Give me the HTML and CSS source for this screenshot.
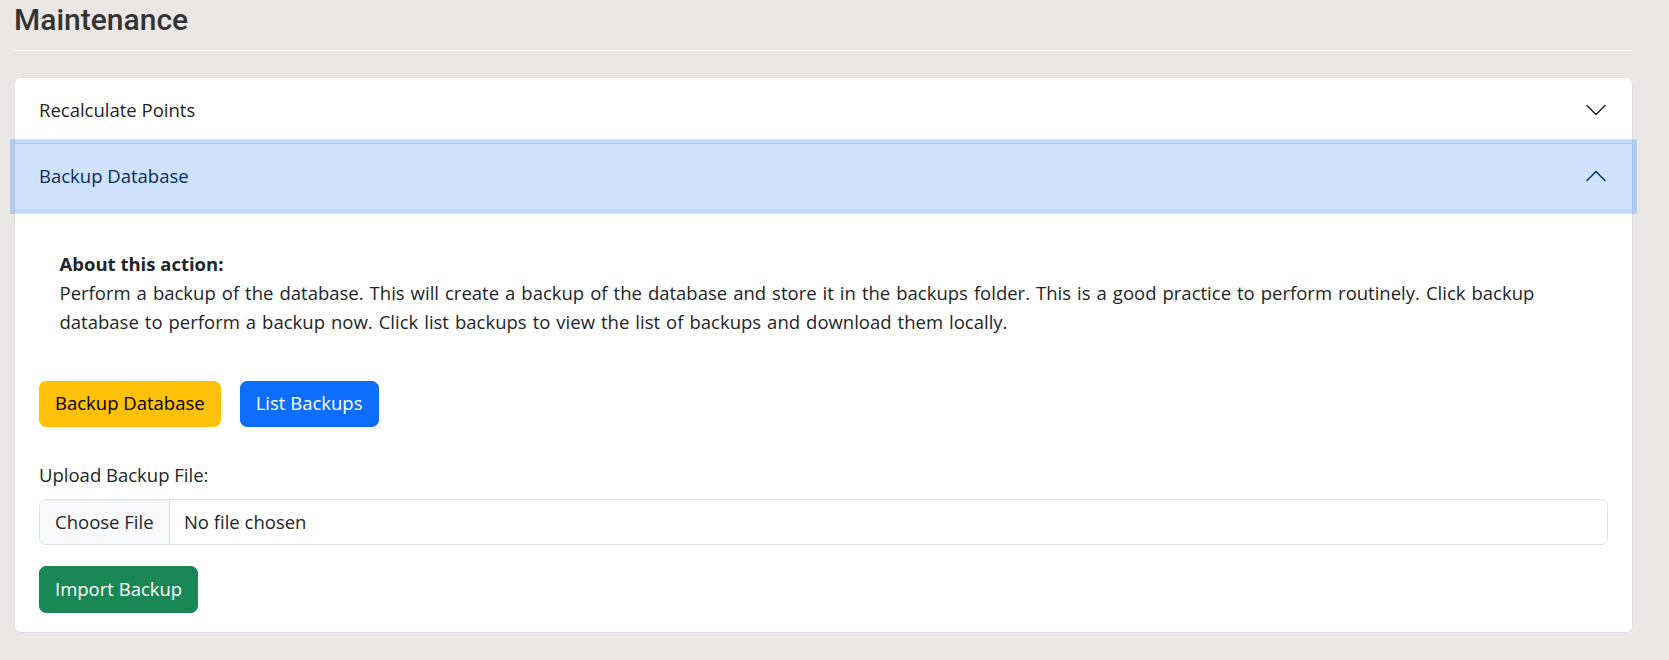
FILE: index.html
```html
<!DOCTYPE html>
<html lang="en">
<head>
<meta charset="utf-8">
<title>Maintenance</title>
<link rel="stylesheet" href="styles.css">
</head>
<body>
<div class="page">
  <h1 class="title">Maintenance</h1>
  <hr class="rule">
  <div class="accordion">
    <div class="acc-item">
      <h2 class="acc-header">
        <button class="acc-btn" type="button">
          <span>Recalculate Points</span>
          <svg class="chev" viewBox="0 0 16 16" fill="none" stroke="#212529" stroke-linecap="round" stroke-linejoin="round"><path d="M2 5L8 11L14 5"/></svg>
        </button>
      </h2>
    </div>
    <div class="acc-item">
      <h2 class="acc-header">
        <button class="acc-btn acc-btn-open" type="button">
          <span>Backup Database</span>
          <svg class="chev chev-open" viewBox="0 0 16 16" fill="none" stroke="#052c65" stroke-linecap="round" stroke-linejoin="round"><path d="M2 5L8 11L14 5"/></svg>
        </button>
      </h2>
      <div class="acc-body">
        <div class="about">
          <strong>About this action:</strong><br>
          Perform a backup of the database. This will create a backup of the database and store it in the backups folder. This is a good practice to perform routinely. Click backup database to perform a backup now. Click list backups to view the list of backups and download them locally.
        </div>
        <div class="actions">
          <button class="btn btn-warning" type="button">Backup Database</button>
          <button class="btn btn-primary" type="button">List Backups</button>
        </div>
        <label class="form-label" for="backupFile">Upload Backup File:</label>
        <input class="file-input" type="file" id="backupFile">
        <div class="import-row">
          <button class="btn btn-success" type="button">Import Backup</button>
        </div>
      </div>
    </div>
  </div>
</div>
</body>
</html>
```
FILE: styles.css
```css
html, body {
  margin: 0;
  padding: 0;
}
body {
  background: #ebe7e5;
  font-family: "Open Sans", "Noto Sans", "Liberation Sans", sans-serif;
  font-size: 18.5px;
  line-height: 28.8px;
  color: #212529;
  min-height: 660px;
}
.page {
  padding: 2px 36.5px 0 14px;
}
.title {
  margin: 0;
  font-family: Roboto, "Liberation Sans", sans-serif;
  font-weight: 500;
  font-size: 30px;
  line-height: 36px;
  color: #333333;
}
.rule {
  margin: 12px 0 26px -0.6px;
  border: 0;
  border-top: 1.2px solid #f4f2f1;
  height: 0;
}
.accordion {
  background: #ffffff;
  border-radius: 7px;
}
.acc-item {
  border: 1px solid #dee2e6;
  background: #ffffff;
}
.acc-item:first-child {
  border-radius: 7px 7px 0 0;
}
.acc-item + .acc-item {
  border-top: 0;
}
.acc-item:last-child {
  border-radius: 0 0 7px 7px;
}
.acc-header {
  margin: 0;
  font-size: inherit;
  font-weight: 400;
}
.acc-btn {
  display: flex;
  align-items: center;
  width: 100%;
  padding: 18px 24px;
  border: 0;
  background: transparent;
  font: inherit;
  line-height: 28.8px;
  color: #212529;
  text-align: left;
  cursor: pointer;
  border-radius: 6px 6px 0 0;
}
.acc-btn-open {
  position: relative;
  z-index: 3;
  border-radius: 0;
  background: #cfe2ff;
  color: #052c65;
  box-shadow: 0 0 0 4.8px rgba(13, 110, 253, 0.25);
}
.chev {
  width: 24px;
  height: 24px;
  margin-left: auto;
  flex-shrink: 0;
}
.chev-open {
  transform: rotate(180deg);
}
.acc-body {
  padding: 19.2px 24px 19.5px;
}
.about {
  padding: 22.5px 20.5px 24px;
  word-spacing: 1.2px;
}
.about strong {
  font-weight: 700;
  word-spacing: 0;
}
.actions {
  display: flex;
  gap: 19px;
  margin-top: 20px;
}
.btn {
  font: inherit;
  line-height: 28.8px;
  padding: 7.8px 15px;
  border: 1px solid transparent;
  border-radius: 7px;
  cursor: pointer;
}
.btn-warning {
  background: #ffc107;
  border-color: #ffc107;
  color: #000000;
}
.btn-primary {
  background: #0d6efd;
  border-color: #0d6efd;
  color: #ffffff;
}
.btn-success {
  background: #198754;
  border-color: #198754;
  color: #ffffff;
}
.form-label {
  display: block;
  margin-top: 33.5px;
  margin-bottom: 9.6px;
}
.file-input {
  display: block;
  box-sizing: border-box;
  width: 100%;
  margin: 0;
  padding: 7.8px 14.4px;
  border: 1px solid #dee2e6;
  border-radius: 7px;
  background: #ffffff;
  font: inherit;
  line-height: 28.8px;
  color: #212529;
  overflow: hidden;
}
.file-input::file-selector-button {
  margin: -7.8px 14.4px -7.8px -14.4px;
  padding: 7.8px 15px;
  border: 0;
  border-right: 1px solid #dee2e6;
  border-radius: 0;
  background: #f8f9fa;
  font: inherit;
  line-height: 28.8px;
  color: #212529;
}
.import-row {
  margin-top: 20.8px;
}
```
